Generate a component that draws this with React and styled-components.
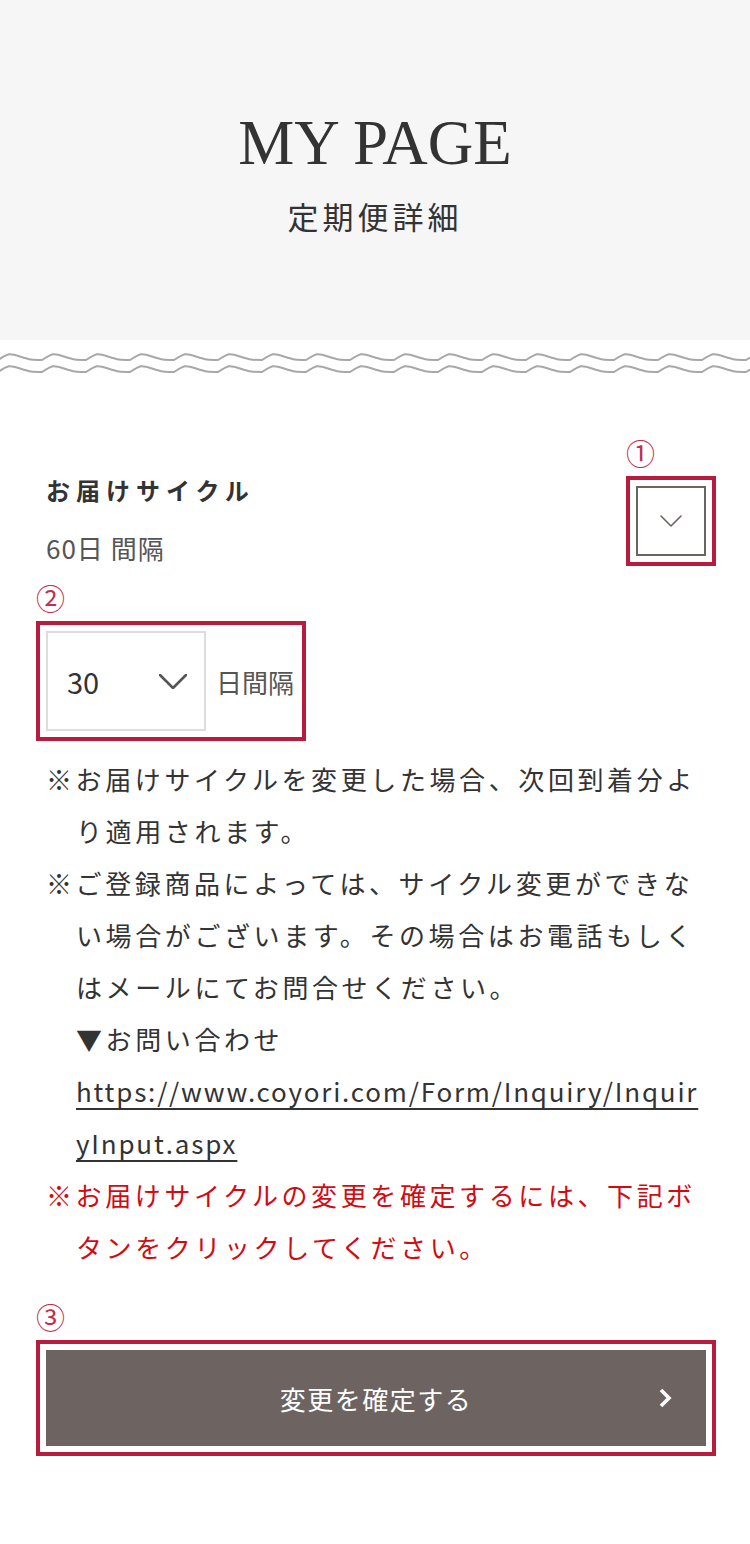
import React from 'react';
import styled, { createGlobalStyle } from 'styled-components';

const GlobalStyle = createGlobalStyle`
  html, body {
    margin: 0;
    padding: 0;
    background: #fff;
  }

  body {
    font-family: "Noto Sans CJK JP", "Noto Sans", sans-serif;
    color: #333;
  }
`;

function wavePath(y, width) {
  let d = `M -44 ${y}`;
  for (let x = -44; x < width + 44; x += 44) {
    d += ` C ${x + 11} ${y - 7}, ${x + 11} ${y - 7}, ${x + 22} ${y - 3.5}`;
    d += ` S ${x + 33} ${y}, ${x + 44} ${y}`;
  }
  return d;
}

function Wave() {
  return (
    <WaveSvg viewBox="0 0 750 28" preserveAspectRatio="none">
      <path d={wavePath(10, 750)} transform="translate(42 0)" />
      <path d={wavePath(22, 750)} transform="translate(42 0)" />
    </WaveSvg>
  );
}

function Chevron({ width, height, stroke }) {
  return (
    <svg width={width} height={height} viewBox={`0 0 ${width} ${height}`} fill="none">
      <polyline
        points={`1,1 ${width / 2},${height - 1} ${width - 1},1`}
        stroke="currentColor"
        strokeWidth={stroke}
        strokeLinecap="round"
        strokeLinejoin="round"
      />
    </svg>
  );
}

function Annotated({ mark, block, children }) {
  return (
    <Marked $block={block}>
      <Badge>{mark}</Badge>
      {children}
    </Marked>
  );
}

export default function App() {
  return (
    <Page>
      <GlobalStyle />
      <Header>
        <PageTitle>MY PAGE</PageTitle>
        <PageSub>定期便詳細</PageSub>
      </Header>
      <Wave />

      <Section>
        <CycleRow>
          <div>
            <Label>お届けサイクル</Label>
            <Value>60日 間隔</Value>
          </div>
          <ToggleSlot>
            <Annotated mark="①">
              <ToggleBox>
                <Chevron width={22} height={12} stroke={1.6} />
              </ToggleBox>
            </Annotated>
          </ToggleSlot>
        </CycleRow>

        <SelectArea>
          <Annotated mark="②">
            <SelectRow>
              <SelectBox>
                <span>30</span>
                <SelectArrow>
                  <Chevron width={28} height={15} stroke={2.6} />
                </SelectArrow>
              </SelectBox>
              <Unit>日間隔</Unit>
            </SelectRow>
          </Annotated>
        </SelectArea>

        <Notes>
          <Note>※お届けサイクルを変更した場合、次回到着分より適用されます。</Note>
          <Note>
            ※ご登録商品によっては、サイクル変更ができない場合がございます。その場合はお電話もしくはメールにてお問合せください。
            <br />
            ▼お問い合わせ
            <br />
            <Link href="#">https://www.coyori.com/Form/Inquiry/InquiryInput.aspx</Link>
          </Note>
          <Note $alert>※お届けサイクルの変更を確定するには、下記ボタンをクリックしてください。</Note>
        </Notes>

        <ButtonArea>
          <Annotated mark="③" block>
            <ConfirmButton type="button">
              変更を確定する
              <ButtonArrow viewBox="0 0 14 22" fill="none">
                <polyline points="3,3 11,11 3,19" stroke="#fff" strokeWidth="3.6" strokeLinejoin="miter" />
              </ButtonArrow>
            </ConfirmButton>
          </Annotated>
        </ButtonArea>
      </Section>
    </Page>
  );
}

const Page = styled.div`
  width: 750px;
  min-height: 1544px;
  background: #fff;
`;

const Header = styled.header`
  height: 340px;
  background: #f6f6f6;
  display: flex;
  flex-direction: column;
  align-items: center;
  padding-top: 112px;
  box-sizing: border-box;
`;

const PageTitle = styled.h1`
  margin: 0;
  font-family: "Liberation Serif", "Noto Serif CJK JP", serif;
  font-weight: 400;
  font-size: 63px;
  line-height: 1;
  color: #333;
`;

const PageSub = styled.p`
  margin: 21px 0 0;
  font-size: 31px;
  line-height: 1.3;
  letter-spacing: 4px;
  color: #333;
`;

const WaveSvg = styled.svg`
  display: block;
  width: 750px;
  height: 28px;
  margin-top: 10px;
  fill: none;
  stroke: #a8a8a8;
  stroke-width: 2;
`;

const Section = styled.section`
  padding: 0 44px 0 46px;
`;

const CycleRow = styled.div`
  display: flex;
  justify-content: space-between;
  align-items: flex-start;
  margin-top: 94px;
`;

const Label = styled.h2`
  margin: 0;
  font-size: 24px;
  font-weight: 700;
  line-height: 36px;
  letter-spacing: 6px;
  color: #333;
`;

const Value = styled.p`
  margin: 20px 0 0;
  font-size: 26px;
  line-height: 39px;
  letter-spacing: 1px;
  color: #555;
`;

const ToggleSlot = styled.div`
  margin-top: 14px;
`;

const Marked = styled.div`
  position: relative;
  display: ${({ $block }) => ($block ? 'block' : 'inline-block')};
  vertical-align: top;
  outline: 4px solid #b71c3f;
  outline-offset: 6px;
`;

const Badge = styled.span`
  position: absolute;
  left: -10px;
  bottom: calc(100% + 19px);
  font-size: 29px;
  line-height: 1;
  color: #c0304f;
  white-space: nowrap;
`;

const ToggleBox = styled.div`
  width: 70px;
  height: 70px;
  box-sizing: border-box;
  border: 2px solid #6d6461;
  display: flex;
  align-items: center;
  justify-content: center;
  color: #6d6461;
`;

const SelectArea = styled.div`
  margin-top: 64px;
`;

const SelectRow = styled.div`
  display: flex;
  align-items: center;
  width: 250px;
`;

const SelectBox = styled.div`
  flex: none;
  width: 160px;
  height: 100px;
  box-sizing: border-box;
  border: 2px solid #ddd;
  display: flex;
  align-items: center;
  justify-content: space-between;
  padding: 0 17px 0 19px;
  font-size: 29px;
  color: #333;
`;

const SelectArrow = styled.span`
  display: flex;
  color: #555;
`;

const Unit = styled.span`
  margin-left: 10px;
  font-size: 26px;
  white-space: nowrap;
  color: #555;
`;

const Notes = styled.div`
  margin-top: 22px;
`;

const Note = styled.p`
  margin: 0;
  padding-left: 30px;
  text-indent: -30px;
  font-size: 26px;
  line-height: 52px;
  letter-spacing: 3.6px;
  color: ${({ $alert }) => ($alert ? '#d20a11' : '#333')};
`;

const Link = styled.a`
  color: #333;
  text-decoration: underline;
  text-underline-offset: 6px;
  letter-spacing: 1.8px;
  word-break: break-all;
`;

const ButtonArea = styled.div`
  margin-top: 77px;
  padding-bottom: 100px;
`;

const ConfirmButton = styled.button`
  position: relative;
  display: flex;
  align-items: center;
  justify-content: center;
  width: 100%;
  height: 96px;
  border: none;
  background: #6d6461;
  color: #fff;
  font-family: "Noto Sans CJK JP", sans-serif;
  font-size: 26px;
  letter-spacing: 1.5px;
  cursor: pointer;
`;

const ButtonArrow = styled.svg`
  position: absolute;
  right: 34px;
  top: 50%;
  width: 14px;
  height: 22px;
  transform: translateY(-50%);
`;
